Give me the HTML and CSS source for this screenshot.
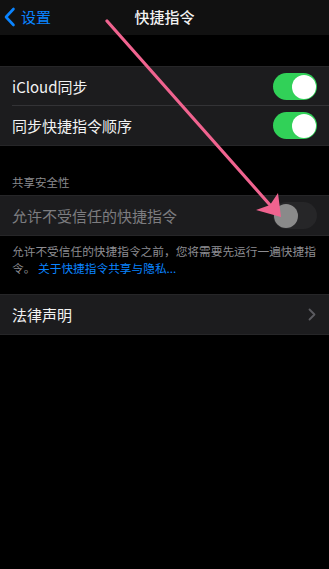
FILE: index.html
```html
<!DOCTYPE html>
<html lang="zh">
<head>
<meta charset="utf-8">
<link rel="stylesheet" href="styles.css">
</head>
<body>
<div class="screen">
  <header class="nav">
    <div class="back">
      <svg class="back-icon" width="12" height="20" viewBox="0 0 12 20"><path d="M9.5 2 L2 10 L9.5 18" fill="none" stroke="#0a84ff" stroke-width="2.6" stroke-linecap="round" stroke-linejoin="round"/></svg>
      <span>设置</span>
    </div>
    <div class="title">快捷指令</div>
  </header>

  <section class="group first">
    <div class="row sep">
      <span class="label">iCloud同步</span>
      <span class="toggle on"><span class="knob"></span></span>
    </div>
    <div class="row">
      <span class="label">同步快捷指令顺序</span>
      <span class="toggle on"><span class="knob"></span></span>
    </div>
  </section>

  <div class="section-header">共享安全性</div>
  <section class="group">
    <div class="row">
      <span class="label dim">允许不受信任的快捷指令</span>
      <span class="toggle off"><span class="knob"></span></span>
    </div>
  </section>
  <div class="footer">允许不受信任的快捷指令之前，您将需要先运行一遍快捷指令。 <span class="link">关于快捷指令共享与隐私...</span></div>

  <section class="group">
    <div class="row tall">
      <span class="label">法律声明</span>
      <svg class="chev" width="8" height="13" viewBox="0 0 8 13"><path d="M1.5 1.5 L6.5 6.5 L1.5 11.5" fill="none" stroke="#5b5b60" stroke-width="1.8" stroke-linecap="round" stroke-linejoin="round"/></svg>
    </div>
  </section>

  <svg class="arrow" width="329" height="569" viewBox="0 0 329 569">
    <line x1="107" y1="21" x2="270" y2="205" stroke="#f0638f" stroke-width="3.2" stroke-linecap="round"/>
    <polygon points="281,217 256,210 270,205 278,193" fill="#f0638f"/>
  </svg>
</div>
</body>
</html>
```
FILE: styles.css
```css
html, body {
  margin: 0;
  padding: 0;
  background: #000;
}
body {
  font-family: "Noto Sans CJK SC", "Noto Sans", sans-serif;
  color: #fff;
}
.screen {
  position: relative;
  width: 329px;
  height: 569px;
  background: #000;
  overflow: hidden;
}
.nav {
  height: 35px;
  background: #111111;
  display: flex;
  align-items: center;
  justify-content: center;
  position: relative;
}
.back {
  position: absolute;
  left: 4px;
  top: 0;
  height: 33px;
  display: flex;
  align-items: center;
  gap: 5px;
  color: #0a84ff;
  font-size: 15px;
}
.back-icon {
  display: block;
}
.title {
  font-size: 15px;
  font-weight: 500;
  margin-top: -2px;
  color: #f2f2f2;
}
.group {
  background: #1c1c1e;
  border-top: 1px solid #262628;
  border-bottom: 1px solid #262628;
}
.group.first {
  margin-top: 31px;
}
.row {
  height: 39px;
  display: flex;
  align-items: center;
  justify-content: space-between;
  padding: 0 12px;
  position: relative;
}
.row.tall {
  height: 39px;
}
.row.sep::after {
  content: "";
  position: absolute;
  left: 12px;
  right: 0;
  bottom: 0;
  height: 1px;
  background: #333336;
}
.label {
  font-size: 15px;
  color: #f2f2f2;
}
.label.dim {
  color: #7d7d80;
}
.toggle {
  width: 44px;
  height: 27px;
  border-radius: 14px;
  position: relative;
  display: block;
}
.toggle.on {
  background: #31d158;
}
.toggle.off {
  background: #262628;
}
.knob {
  position: absolute;
  top: 1.5px;
  width: 24px;
  height: 24px;
  border-radius: 50%;
  background: #fff;
}
.toggle.on .knob {
  right: 1.5px;
}
.toggle.off .knob {
  left: 1px;
  background: #8a8a8a;
}
.section-header {
  font-size: 11.5px;
  line-height: 16px;
  color: #8a8a8e;
  padding: 28px 12px 5px;
}
.footer {
  font-size: 11.7px;
  line-height: 16.5px;
  color: #8d8d92;
  padding: 7px 12px 18px;
}
.link {
  color: #0a84ff;
}
.chev {
  display: block;
  margin-right: 1px;
}
.arrow {
  position: absolute;
  left: 0;
  top: 0;
  pointer-events: none;
}
```
